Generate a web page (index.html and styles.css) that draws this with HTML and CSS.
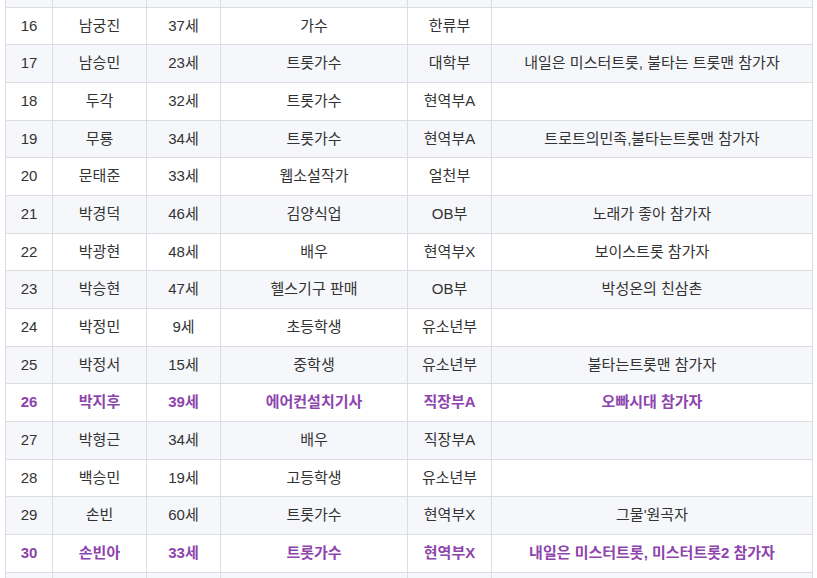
FILE: index.html
```html
<!DOCTYPE html>
<html lang="ko">
<head>
<meta charset="utf-8">
<title>참가자 목록</title>
<link rel="stylesheet" href="styles.css">
</head>
<body>
<div class="wrap">
<table class="roster">
<colgroup>
<col class="c-no"><col class="c-name"><col class="c-age"><col class="c-job"><col class="c-div"><col class="c-note">
</colgroup>
<tbody>
<tr class="edge"><td>&nbsp;</td><td>&nbsp;</td><td>&nbsp;</td><td>&nbsp;</td><td>&nbsp;</td><td>&nbsp;</td></tr>
<tr><td>16</td><td>남궁진</td><td>37세</td><td>가수</td><td>한류부</td><td></td></tr>
<tr><td>17</td><td>남승민</td><td>23세</td><td>트롯가수</td><td>대학부</td><td>내일은 미스터트롯, 불타는 트롯맨 참가자</td></tr>
<tr><td>18</td><td>두각</td><td>32세</td><td>트롯가수</td><td>현역부A</td><td></td></tr>
<tr><td>19</td><td>무룡</td><td>34세</td><td>트롯가수</td><td>현역부A</td><td>트로트의민족,불타는트롯맨 참가자</td></tr>
<tr><td>20</td><td>문태준</td><td>33세</td><td>웹소설작가</td><td>얼천부</td><td></td></tr>
<tr><td>21</td><td>박경덕</td><td>46세</td><td>김양식업</td><td>OB부</td><td>노래가 좋아 참가자</td></tr>
<tr><td>22</td><td>박광현</td><td>48세</td><td>배우</td><td>현역부X</td><td>보이스트롯 참가자</td></tr>
<tr><td>23</td><td>박승현</td><td>47세</td><td>헬스기구 판매</td><td>OB부</td><td>박성온의 친삼촌</td></tr>
<tr><td>24</td><td>박정민</td><td>9세</td><td>초등학생</td><td>유소년부</td><td></td></tr>
<tr><td>25</td><td>박정서</td><td>15세</td><td>중학생</td><td>유소년부</td><td>불타는트롯맨 참가자</td></tr>
<tr class="hl"><td>26</td><td>박지후</td><td>39세</td><td>에어컨설치기사</td><td>직장부A</td><td>오빠시대 참가자</td></tr>
<tr><td>27</td><td>박형근</td><td>34세</td><td>배우</td><td>직장부A</td><td></td></tr>
<tr><td>28</td><td>백승민</td><td>19세</td><td>고등학생</td><td>유소년부</td><td></td></tr>
<tr><td>29</td><td>손빈</td><td>60세</td><td>트롯가수</td><td>현역부X</td><td>그물'원곡자</td></tr>
<tr class="hl"><td>30</td><td>손빈아</td><td>33세</td><td>트롯가수</td><td>현역부X</td><td>내일은 미스터트롯, 미스터트롯2 참가자</td></tr>
<tr class="edge"><td>&nbsp;</td><td>&nbsp;</td><td>&nbsp;</td><td>&nbsp;</td><td>&nbsp;</td><td>&nbsp;</td></tr>
</tbody>
</table>
</div>
</body>
</html>
```

FILE: styles.css
```css
html, body {
  margin: 0;
  padding: 0;
  background: #ffffff;
}
.wrap {
  padding-left: 5px;
  overflow: hidden;
  height: 578px;
}
.roster {
  margin-top: -31px;
  width: 807px;
  border-collapse: collapse;
  table-layout: fixed;
  font-family: "Liberation Sans", "Noto Sans CJK KR", sans-serif;
  font-size: 15px;
  color: #333333;
}
.c-no { width: 47px; }
.c-name { width: 94px; }
.c-age { width: 74px; }
.c-job { width: 187px; }
.c-div { width: 84px; }
.c-note { width: 321px; }
.roster td {
  border: 1px solid #dcdde2;
  padding: 8px 0;
  line-height: 20.65px;
  text-align: center;
  white-space: nowrap;
}
.roster tr:nth-child(odd) td {
  background: #f6f7fa;
}
.roster tr.hl td {
  color: #8e44ad;
  font-weight: bold;
}
```
